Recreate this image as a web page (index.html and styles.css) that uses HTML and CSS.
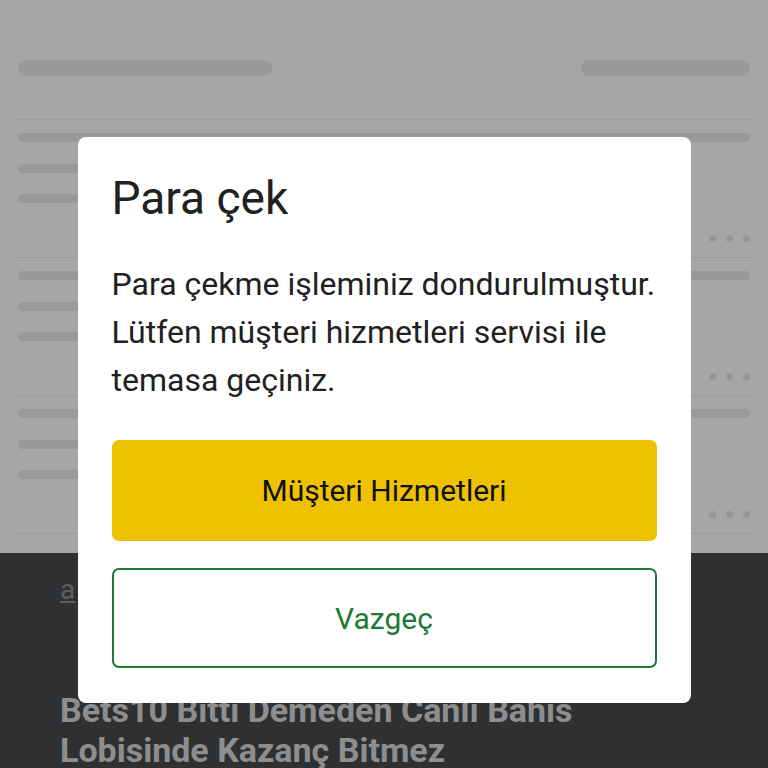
FILE: index.html
```html
<!DOCTYPE html>
<html lang="tr">
<head>
    <meta charset="UTF-8">
    <meta name="viewport" content="width=device-width, initial-scale=1.0">
    <title>Para çek</title>
    <link rel="stylesheet" href="styles.css">
</head>
<body>
    <div class="page">
        <div class="loading">
            <div class="header-row">
                <div class="bar bar-left"></div>
                <div class="bar bar-right"></div>
            </div>
            <div class="item">
                <div class="line line-full"></div>
                <div class="line line-mid"></div>
                <div class="line line-short"></div>
                <div class="dots"><span></span><span></span><span></span></div>
            </div>
            <div class="item">
                <div class="line line-full"></div>
                <div class="line line-mid"></div>
                <div class="line line-short"></div>
                <div class="dots"><span></span><span></span><span></span></div>
            </div>
            <div class="item">
                <div class="line line-full"></div>
                <div class="line line-mid"></div>
                <div class="line line-short"></div>
                <div class="dots"><span></span><span></span><span></span></div>
            </div>
        </div>

        <div class="promo">
            <a class="crumb" href="#">a</a>
            <h2 class="promo-title">Bets10 Bitti Demeden Canlı Bahis Lobisinde Kazanç Bitmez</h2>
        </div>
    </div>

    <div class="overlay">
        <div class="dialog">
            <h1 class="dialog-title">Para çek</h1>
            <p class="dialog-text">Para çekme işleminiz dondurulmuştur. Lütfen müşteri hizmetleri servisi ile temasa geçiniz.</p>
            <button class="btn btn-primary">Müşteri Hizmetleri</button>
            <button class="btn btn-outline">Vazgeç</button>
        </div>
    </div>
</body>
</html>
```

FILE: styles.css
```css
body {
    margin: 0;
    font-family: Roboto, "Liberation Sans", sans-serif;
    background: #fff;
    overflow: hidden;
}

.page {
    height: 768px;
    display: flex;
    flex-direction: column;
}

/* skeleton list while content loads */
.loading {
    padding: 0 16px;
}

.header-row {
    display: flex;
    justify-content: space-between;
    padding: 60px 2px 0;
    height: 59px;
    border-bottom: 1px solid #eeeeee;
}

.bar {
    height: 16px;
    border-radius: 8px;
    background: #ebebeb;
}

.bar-left {
    width: 254px;
}

.bar-right {
    width: 169px;
}

.item {
    display: flex;
    flex-direction: column;
    height: 124px;
    padding: 13px 2px 0;
    border-bottom: 1px solid #eeeeee;
}

.line {
    height: 9px;
    border-radius: 5px;
    background: #ebebeb;
}

.line-full {
    width: 100%;
}

.line-mid {
    width: 56%;
    margin-top: 22px;
}

.line-short {
    width: 48%;
    margin-top: 21px;
}

.dots {
    display: flex;
    justify-content: flex-end;
    gap: 10px;
    margin-top: 32px;
}

.dots span {
    width: 7px;
    height: 7px;
    border-radius: 50%;
    background: #e6e6e6;
}

/* dark promo block under the list */
.promo {
    flex: 1;
    margin-top: 19px;
    background: #474b4d;
    padding: 20px 60px 0;
}

.crumb {
    color: #8e9192;
    font-size: 28px;
}

.promo-title {
    margin: 84px 0 0;
    color: #dadada;
    font-size: 34px;
    font-weight: 700;
    line-height: 40px;
}

/* modal */
.overlay {
    position: fixed;
    inset: 0;
    background: rgba(0, 0, 0, 0.35);
    display: flex;
    justify-content: center;
    align-items: flex-start;
    padding-top: 137px;
}

.dialog {
    width: 545px;
    background: #fff;
    border-radius: 8px;
    padding: 34px 34px 35px;
    display: flex;
    flex-direction: column;
}

.dialog-title {
    margin: 0;
    font-size: 46px;
    font-weight: 400;
    line-height: 55px;
    color: #212121;
}

.dialog-text {
    margin: 34px 0 0;
    font-size: 32px;
    line-height: 48px;
    color: #212121;
}

.btn {
    height: 101px;
    border-radius: 7px;
    font-family: inherit;
    font-size: 30px;
    cursor: pointer;
}

.btn-primary {
    margin-top: 36px;
    background: #eec200;
    border: none;
    color: #111;
}

.btn-outline {
    margin-top: 27px;
    height: 100px;
    background: #fff;
    border: 2px solid #1e7a35;
    color: #1e7a35;
}
```
